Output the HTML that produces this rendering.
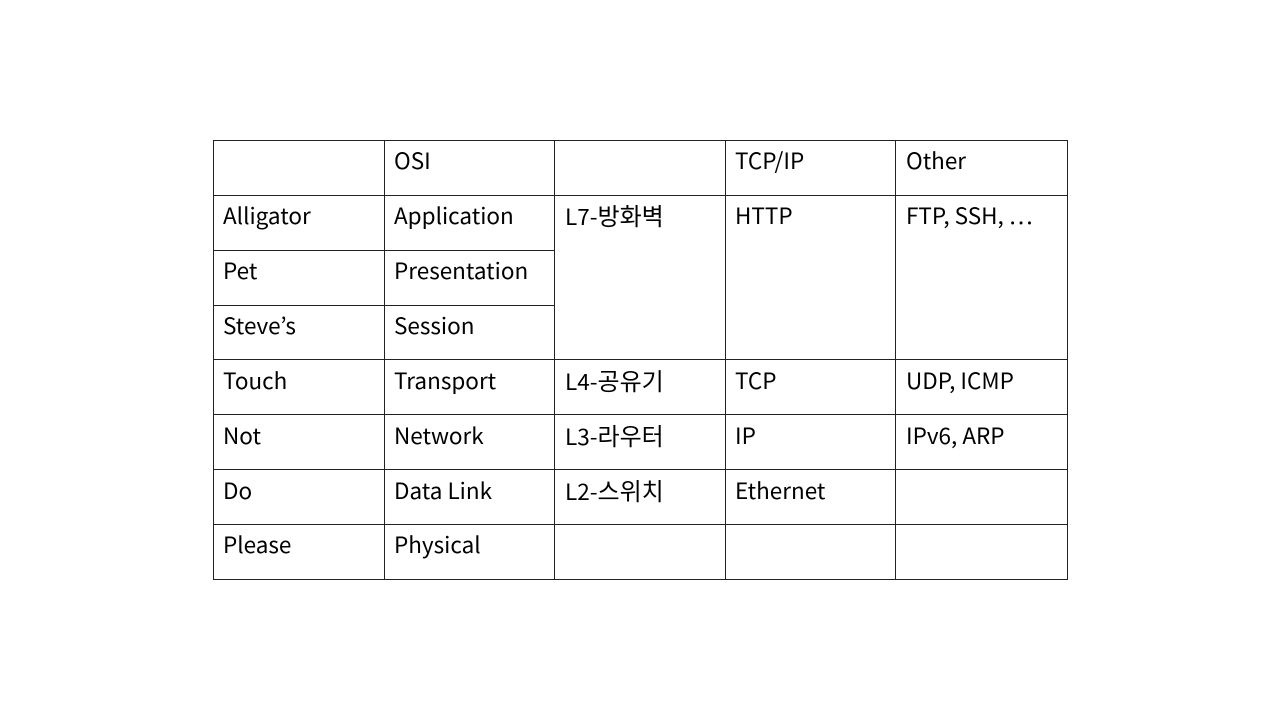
<!DOCTYPE html>
<html><head><meta charset="utf-8"><style>
body{margin:0;width:1280px;height:720px;background:#fff;position:relative;overflow:hidden;font-family:"Noto Sans CJK KR","NanumGothic",sans-serif;}
.h{position:absolute;height:1px;background:#222;}
.v{position:absolute;width:1px;background:#222;}
.t{position:absolute;font-size:22.5px;line-height:26px;color:#000;white-space:nowrap;margin-top:-1px;}
.k{font-size:24px;}
</style></head><body>
<div class="h" style="left:213px;top:140px;width:855px"></div>
<div class="h" style="left:213px;top:195px;width:855px"></div>
<div class="h" style="left:213px;top:250px;width:342px"></div>
<div class="h" style="left:213px;top:305px;width:342px"></div>
<div class="h" style="left:213px;top:359px;width:855px"></div>
<div class="h" style="left:213px;top:414px;width:855px"></div>
<div class="h" style="left:213px;top:469px;width:855px"></div>
<div class="h" style="left:213px;top:524px;width:855px"></div>
<div class="h" style="left:213px;top:579px;width:855px"></div>
<div class="v" style="left:213px;top:140px;height:440px"></div>
<div class="v" style="left:384px;top:140px;height:440px"></div>
<div class="v" style="left:554px;top:140px;height:440px"></div>
<div class="v" style="left:725px;top:140px;height:440px"></div>
<div class="v" style="left:895px;top:140px;height:440px"></div>
<div class="v" style="left:1067px;top:140px;height:440px"></div>

<div class="t" style="left:394px;top:148px">OSI</div>
<div class="t" style="left:735px;top:148px">TCP/IP</div>
<div class="t" style="left:906px;top:148px">Other</div>

<div class="t" style="left:223px;top:203px">Alligator</div>
<div class="t" style="left:394px;top:203px">Application</div>
<div class="t" style="left:565px;top:203px">L7-<span class="k">방화벽</span></div>
<div class="t" style="left:735px;top:203px">HTTP</div>
<div class="t" style="left:906px;top:203px">FTP, SSH, …</div>

<div class="t" style="left:223px;top:258px">Pet</div>
<div class="t" style="left:394px;top:258px">Presentation</div>

<div class="t" style="left:223px;top:313px">Steve’s</div>
<div class="t" style="left:394px;top:313px">Session</div>

<div class="t" style="left:223px;top:368px">Touch</div>
<div class="t" style="left:394px;top:368px">Transport</div>
<div class="t" style="left:565px;top:368px">L4-<span class="k">공유기</span></div>
<div class="t" style="left:735px;top:368px">TCP</div>
<div class="t" style="left:906px;top:368px">UDP, ICMP</div>

<div class="t" style="left:223px;top:423px">Not</div>
<div class="t" style="left:394px;top:423px">Network</div>
<div class="t" style="left:565px;top:423px">L3-<span class="k">라우터</span></div>
<div class="t" style="left:735px;top:423px">IP</div>
<div class="t" style="left:906px;top:423px">IPv6, ARP</div>

<div class="t" style="left:223px;top:478px">Do</div>
<div class="t" style="left:394px;top:478px">Data Link</div>
<div class="t" style="left:565px;top:478px">L2-<span class="k">스위치</span></div>
<div class="t" style="left:735px;top:478px">Ethernet</div>

<div class="t" style="left:223px;top:532px">Please</div>
<div class="t" style="left:394px;top:532px">Physical</div>
</body></html>
